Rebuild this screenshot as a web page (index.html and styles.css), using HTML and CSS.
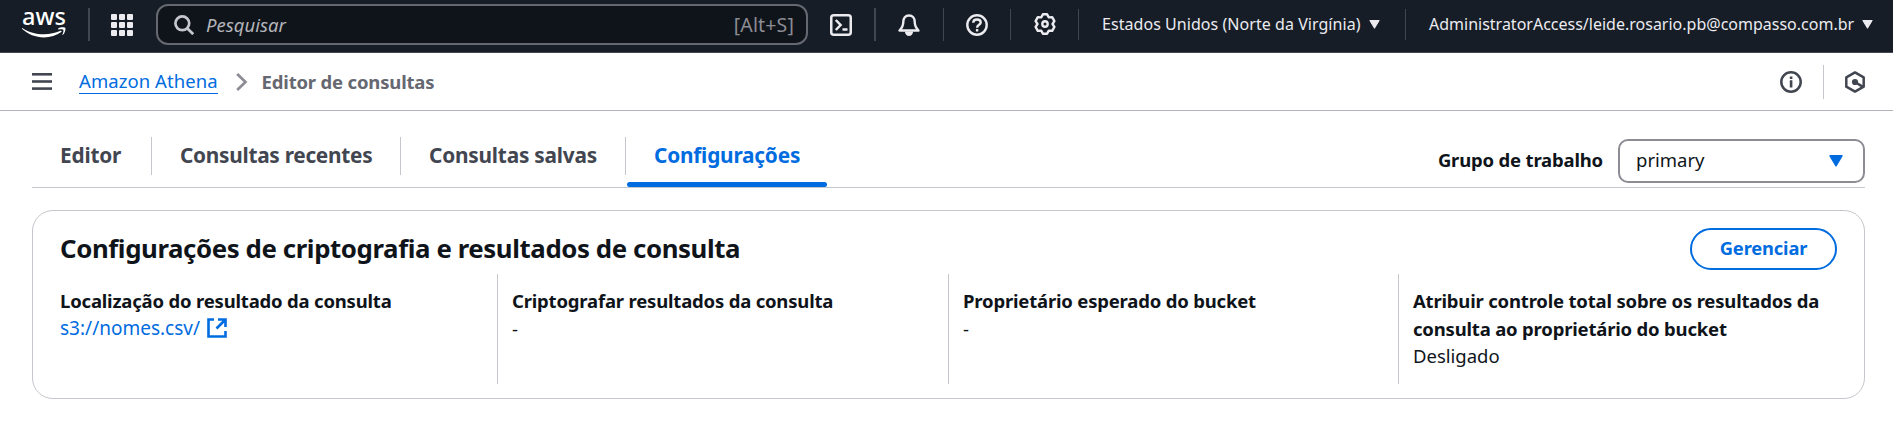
FILE: index.html
```html
<!DOCTYPE html>
<html lang="pt-BR">
<head>
<meta charset="utf-8">
<title>Amazon Athena</title>
<link rel="stylesheet" href="styles.css">
</head>
<body>
<header class="topbar">
  <div class="logo">
    <span class="logo-text">aws</span>
    <svg class="logo-smile" width="44" height="11" viewBox="0 0 44 11"><path d="M.6 1.200C7 5.400 14 7.200 22 7.200c5.500 0 11.500-1.200 16.500-3.400.9-.4 1.500.6.800 1.200C34.700 8.500 28 10.400 22 10.400 13.500 10.400 6 7.200.2 2-.2 1.500.1.900.6 1.200z"/><path d="M41.200 2.800c-.7-.9-3.300-.6-4.800-.4-.5 0-.6-.5-.1-.9 2.200-1.600 6.500-1.300 7-.6.500.7-.1 5-2.300 6.900-.4.300-.8.100-.6-.4.500-1.200 1.500-3.800.8-4.600z"/></svg>
  </div>
  <span class="rule rule-wide logo-rule"></span>
  <svg class="apps" width="22" height="22" viewBox="0 0 22 22"><g fill="#ebebf0"><rect width="6" height="6" rx="1"/><rect x="8" width="6" height="6" rx="1"/><rect x="16" width="6" height="6" rx="1"/><rect y="8" width="6" height="6" rx="1"/><rect x="8" y="8" width="6" height="6" rx="1"/><rect x="16" y="8" width="6" height="6" rx="1"/><rect y="16" width="6" height="6" rx="1"/><rect x="8" y="16" width="6" height="6" rx="1"/><rect x="16" y="16" width="6" height="6" rx="1"/></g></svg>
  <div class="search">
    <svg width="20" height="20" viewBox="0 0 20 20" fill="none" stroke="#c6c6cd" stroke-width="2.700"><circle cx="8.300" cy="8.300" r="6.900"/><path d="M13.200 13.200l6 6"/></svg>
    <span class="search-text">Pesquisar</span>
    <span class="search-key">[Alt+S]</span>
  </div>
  <svg class="ic shell" width="22" height="22" viewBox="0 0 22 22" fill="none" stroke="#ebebf0" stroke-width="2.500"><rect x="1.250" y="1.250" width="19.500" height="19.500" rx="2.500"/><path d="M5.800 6l4.800 5-4.800 5M12.500 15.500h5"/></svg>
  <span class="rule rule-wide r1"></span>
  <svg class="ic bell" width="22" height="23" viewBox="0 0 22 23"><path d="M11 1.500c-3.600 0-5.700 2.700-5.700 6.300 0 4.200-1.300 6.300-3.800 8.700h19c-2.500-2.400-3.800-4.500-3.800-8.700 0-3.600-2.100-6.300-5.700-6.300z" fill="none" stroke="#ebebf0" stroke-width="2.400" stroke-linejoin="round"/><path d="M6.800 17.500h8.400c-.2 2.700-2 4.500-4.200 4.500s-4-1.800-4.200-4.500z" fill="#ebebf0"/></svg>
  <span class="rule r2"></span>
  <svg class="ic help" width="22" height="22" viewBox="0 0 22 22" fill="none" stroke="#ebebf0" stroke-width="2.400"><circle cx="11" cy="11" r="9.700"/><path d="M7.200 8.700c.1-2 1.700-3.200 3.800-3.200s3.700 1.100 3.700 2.900c0 2.400-3.600 2.300-3.600 5.300M11.100 15v2.500"/></svg>
  <span class="rule rule-short r3"></span>
  <svg class="ic gear" width="22" height="22" viewBox="0 0 22 22" fill="none" stroke="#ebebf0" stroke-width="2.400" stroke-linejoin="round"><path d="M8.900 1.300h4.200l1.700 3.100 3.400-.2 2.200 3.900-1.900 2.900 1.900 2.900-2.200 3.900-3.400-.2-1.700 3.100H8.900l-1.700-3.100-3.400.2-2.200-3.900L3.500 11 1.600 8.100l2.200-3.900 3.400.2z"/><circle cx="11" cy="11" r="2.700"/></svg>
  <span class="rule rule-short r4"></span>
  <span class="region">Estados Unidos (Norte da Virgínia)</span>
  <svg class="caret c1" width="11" height="9" viewBox="0 0 11 9"><path d="M.8.500h9.400L5.500 8.300z" fill="#ebebf0" stroke="#ebebf0" stroke-linejoin="round"/></svg>
  <span class="rule rule-short r5"></span>
  <span class="account">AdministratorAccess/leide.rosario.pb@compasso.com.br</span>
  <svg class="caret c2" width="11" height="9" viewBox="0 0 11 9"><path d="M.8.500h9.400L5.500 8.300z" fill="#ebebf0" stroke="#ebebf0" stroke-linejoin="round"/></svg>
</header>

<nav class="crumbs">
  <svg class="menu" width="20" height="17" viewBox="0 0 20 17" fill="#424650"><rect y="0" width="20" height="2.600"/><rect y="7.200" width="20" height="2.600"/><rect y="14.300" width="20" height="2.600"/></svg>
  <a class="crumb-link">Amazon Athena</a>
  <svg class="chevron" width="12" height="18" viewBox="0 0 12 18" fill="none" stroke="#8c8c94" stroke-width="2.700"><path d="M1.200 1l8.300 8-8.300 8"/></svg>
  <span class="crumb-current">Editor de consultas</span>
  <svg class="info" width="22" height="22" viewBox="0 0 22 22"><circle cx="11" cy="11" r="9.700" fill="none" stroke="#424650" stroke-width="2.500"/><path d="M9.800 5.500h2.600v2.400H9.800zM9.800 9.300h2.600v7.200H9.800z" fill="#424650"/></svg>
  <span class="crumb-rule"></span>
  <svg class="hex" width="20" height="22" viewBox="0 0 20 22"><path d="M10 1.400l8.700 4.900v9.400L10 20.600l-8.700-4.900V6.300z" fill="none" stroke="#424650" stroke-width="2.500" stroke-linejoin="round"/><circle cx="10" cy="11" r="3.100" fill="#424650"/><path d="M10 11l7.500 4.600" stroke="#424650" stroke-width="2.600"/></svg>
</nav>

<main class="content">
  <div class="tabs">
    <span class="tab tab-editor">Editor</span>
    <span class="tab tab-recent">Consultas recentes</span>
    <span class="tab tab-saved">Consultas salvas</span>
    <span class="tab tab-settings active">Configurações</span>
    <div class="workgroup">
      <span class="wg-label">Grupo de trabalho</span>
      <div class="select"><span>primary</span><svg width="14" height="12" viewBox="0 0 14 12"><path d="M1 .8h12L7 11z" fill="#006ce0" stroke="#006ce0" stroke-width="1.400" stroke-linejoin="round"/></svg></div>
    </div>
  </div>

  <section class="card">
    <div class="card-head">
      <h2 class="card-title">Configurações de criptografia e resultados de consulta</h2>
      <button class="manage">Gerenciar</button>
    </div>
    <div class="cols">
      <div class="col">
        <div class="key">Localização do resultado da consulta</div>
        <div class="val link"><span>s3://nomes.csv/</span><svg width="20" height="20" viewBox="0 0 20 20" fill="none" stroke="#006ce0" stroke-width="2.600"><path d="M7 1.500H1.500v17h17V13"/><path d="M11 1.500h7.500V9M18 2l-8.500 8.500"/></svg></div>
      </div>
      <div class="col">
        <div class="key">Criptografar resultados da consulta</div>
        <div class="val">-</div>
      </div>
      <div class="col">
        <div class="key">Proprietário esperado do bucket</div>
        <div class="val">-</div>
      </div>
      <div class="col">
        <div class="key">Atribuir controle total sobre os resultados da consulta ao proprietário do bucket</div>
        <div class="val">Desligado</div>
      </div>
    </div>
  </section>
</main>
</body>
</html>
```
FILE: styles.css
```css
* { box-sizing: border-box; }
body {
  margin: 0;
  background: #fff;
  color: #0f141a;
  font-family: "Noto Sans", "Open Sans", sans-serif;
  font-size: 18.5px;
  line-height: 27.5px;
}
svg { display: block; flex: none; }
span, a { white-space: nowrap; }

/* Top navigation */
.topbar {
  display: flex;
  align-items: flex-start;
  height: 53px;
  padding-left: 22px;
  background: #161d26;
  border-bottom: 1px solid #424650;
  color: #ebebf0;
}
.logo { width: 44px; margin-top: 4px; }
.logo-text {
  display: block;
  height: 23px;
  line-height: 24px;
  font-size: 23.5px;
  font-weight: 500;
  text-align: center;
  color: #fff;
}
.logo-smile { fill: #fff; }
.rule { flex: none; width: 1px; height: 33px; margin-top: 8px; background: #424650; }
.rule-wide { width: 2px; }
.rule-short { height: 31px; margin-top: 9px; }
.logo-rule { margin-left: 22px; }
.apps { margin: 14px 0 0 21px; }
.search {
  display: flex;
  align-items: center;
  width: 652px;
  height: 41px;
  margin: 4px 0 0 23px;
  padding: 0 12px 0 16px;
  background: #0f141a;
  border: 2px solid #656871;
  border-radius: 12px;
}
.search-text { margin-left: 12px; font-style: italic; color: #b4b4bb; }
.search-key { margin-left: auto; font-size: 19.5px; letter-spacing: 0.15px; color: #8c8c94; }
.ic { margin-top: 14px; }
.shell { margin-left: 22px; }
.r1 { margin-left: 22px; }
.bell { margin-left: 22px; }
.r2 { margin-left: 23px; }
.help { margin-left: 22px; }
.r3 { margin-left: 22px; }
.gear { margin: 13px 0 0 23px; }
.r4 { margin-left: 22px; }
.region, .account {
  margin-top: 10px;
  font-size: 16px;
  line-height: 28px;
}
.region { width: 260px; margin-left: 23px; letter-spacing: 0.05px; }
.account { width: 424px; margin-left: 23px; }
.caret { margin-top: 20px; }
.c1 { margin-left: 7px; }
.r5 { margin-left: 25px; }
.c2 { margin-left: 9px; }

/* Breadcrumbs */
.crumbs {
  display: flex;
  align-items: center;
  height: 58px;
  padding: 0 28px 0 32px;
  border-bottom: 1px solid #b4b4bb;
}
.crumb-link {
  margin-left: 27px;
  line-height: 24px;
  letter-spacing: 0.06px;
  border-bottom: 1px solid #006ce0;
  color: #006ce0;
}
.chevron { margin-left: 18px; }
.crumb-current { margin-left: 14px; font-weight: 700; letter-spacing: -0.18px; color: #656871; }
.info { margin-left: auto; }
.crumb-rule { width: 1px; height: 34px; margin: 0 21px; background: #c6c6cd; }

/* Tabs */
.content { padding: 0 28px 0 32px; }
.tabs {
  display: flex;
  height: 77px;
  padding-top: 26px;
  border-bottom: 1px solid #c6c6cd;
}
.tab {
  position: relative;
  height: 50px;
  padding-left: 28px;
  font-size: 20.8px;
  font-weight: 700;
  letter-spacing: -0.2px;
  line-height: 36px;
  color: #424650;
}
.tab-editor { width: 120px; }
.tab-recent { width: 249px; letter-spacing: -0.27px; }
.tab-saved { width: 225px; }
.tab-settings { width: 202px; }
.tab:not(.active)::after {
  content: "";
  position: absolute;
  right: 0;
  top: 0;
  width: 1px;
  height: 38px;
  background: #c6c6cd;
}
.tab.active { color: #006ce0; }
.tab.active::after {
  content: "";
  position: absolute;
  left: 1px;
  right: 1px;
  bottom: 0;
  height: 5px;
  border-radius: 3px;
  background: #006ce0;
}
.workgroup { display: flex; align-items: center; height: 44px; margin: 2px 0 0 auto; }
.wg-label { margin-top: -2px; font-weight: 700; letter-spacing: -0.18px; }
.select {
  display: flex;
  align-items: center;
  justify-content: space-between;
  width: 247px;
  height: 44px;
  margin-left: 15px;
  padding: 0 20px 0 16px;
  border: 2px solid #8c8c94;
  border-radius: 10px;
}
.select span { margin-top: -2px; }

/* Settings card */
.card {
  height: 189px;
  margin-top: 22px;
  padding: 16px 27px 0 27px;
  border: 1px solid #c6c6cd;
  border-radius: 21px;
}
.card-head { display: flex; align-items: center; justify-content: space-between; height: 43px; }
.card-title { margin: 0; font-size: 25.8px; font-weight: 700; letter-spacing: -0.4px; }
.manage {
  width: 147px;
  height: 42px;
  padding: 0 0 3px;
  background: #fff;
  border: 2px solid #006ce0;
  border-radius: 21px;
  color: #006ce0;
  font: 700 18.3px "Noto Sans", "Open Sans", sans-serif;
  letter-spacing: -0.15px;
}
.cols { display: grid; grid-template-columns: 437px 451px 450px 466px; margin-top: 4px; }
.col { height: 110px; padding: 13px 30px 0 0; }
.col + .col { padding-left: 14px; border-left: 1px solid #c6c6cd; }
.key { font-weight: 700; letter-spacing: -0.19px; }
.link { display: flex; align-items: center; gap: 7px; color: #006ce0; font-size: 19px; }
```
